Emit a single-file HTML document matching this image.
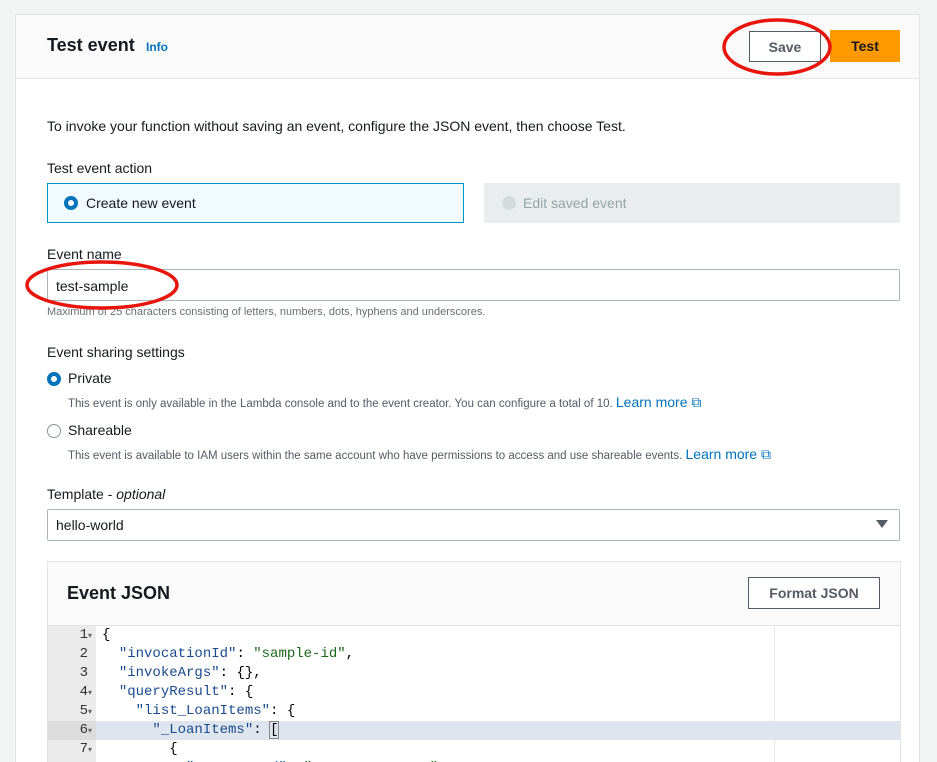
<!DOCTYPE html>
<html style="width:937px;height:762px;overflow:hidden"><head><meta charset="utf-8"><style>
*{box-sizing:border-box;margin:0;padding:0}
body{width:937px;height:762px;overflow:hidden;background:#f2f3f3;font-family:"Liberation Sans",sans-serif;color:#16191f;position:relative}
.wrap{position:absolute;left:0;top:0;width:937px;height:762px;overflow:hidden}
.a{position:absolute;white-space:nowrap}
.card{position:absolute;left:15px;top:14px;width:905px;height:760px;background:#fff;border:1px solid #e3e5e5}
.hdr{position:absolute;left:0;top:0;width:903px;height:64px;background:#fafafa;border-bottom:1px solid #e3e5e5}
.btn{position:absolute;border:1px solid #545b64;background:#fff;font-weight:bold;font-size:14px;color:#545b64;display:flex;align-items:center;justify-content:center}
.radio{position:absolute;width:14px;height:14px;border-radius:50%}
.on{border:4px solid #0073bb;background:#fff}
.off{border:1px solid #879596;background:#fff}
.link{color:#0073bb}
.mono{font-family:"Liberation Mono",monospace;font-size:14px}
.k{color:#1a4b8f}.s{color:#1b6a1b}
</style></head><body><div class="wrap">
<div class="card"><div class="hdr"></div></div>
<div class="a" style="left:47px;top:35px;font-size:18px;font-weight:bold">Test event</div>
<div class="a link" style="left:146px;top:40px;font-size:12px;font-weight:bold">Info</div>
<div class="btn" style="left:749px;top:31px;width:72px;height:31px">Save</div>
<div class="btn" style="left:830px;top:30px;width:70px;height:32px;background:#ff9900;border-color:#ff9900;color:#16191f">Test</div>

<div class="a" style="left:47px;top:118px;font-size:14px">To invoke your function without saving an event, configure the JSON event, then choose Test.</div>
<div class="a" style="left:47px;top:160px;font-size:14px">Test event action</div>
<div class="a" style="left:47px;top:183px;width:417px;height:40px;background:#f1faff;border:1px solid #0093c7"></div>
<div class="radio on" style="left:64px;top:196px"></div>
<div class="a" style="left:86px;top:195px;font-size:14px">Create new event</div>
<div class="a" style="left:484px;top:183px;width:416px;height:40px;background:#eaeded"></div>
<div class="radio" style="left:502px;top:196px;background:#d5dbdb"></div>
<div class="a" style="left:523px;top:195px;font-size:14px;color:#95a5a6">Edit saved event</div>

<div class="a" style="left:47px;top:246px;font-size:14px">Event name</div>
<div class="a" style="left:47px;top:269px;width:853px;height:32px;border:1px solid #aab7b8;border-radius:2px"></div>
<div class="a" style="left:56px;top:278px;font-size:14px">test-sample</div>
<div class="a" style="left:47px;top:306px;font-size:11px;color:#687078">Maximum of 25 characters consisting of letters, numbers, dots, hyphens and underscores.</div>

<div class="a" style="left:47px;top:344px;font-size:14px">Event sharing settings</div>
<div class="radio on" style="left:47px;top:372px"></div>
<div class="a" style="left:68px;top:370px;font-size:14px">Private</div>
<div class="a" style="left:68px;top:394px;font-size:11.5px;color:#545b64">This event is only available in the Lambda console and to the event creator. You can configure a total of 10. <span class="link" style="font-size:14px">Learn more ⧉</span></div>
<div class="radio off" style="left:47px;top:424px"></div>
<div class="a" style="left:68px;top:422px;font-size:14px">Shareable</div>
<div class="a" style="left:68px;top:446px;font-size:11.5px;color:#545b64">This event is available to IAM users within the same account who have permissions to access and use shareable events. <span class="link" style="font-size:14px">Learn more ⧉</span></div>

<div class="a" style="left:47px;top:486px;font-size:14px">Template - <i>optional</i></div>
<div class="a" style="left:47px;top:509px;width:853px;height:32px;border:1px solid #aab7b8;border-radius:2px"></div>
<div class="a" style="left:56px;top:517px;font-size:14px">hello-world</div>
<svg class="a" style="left:876px;top:519px" width="12" height="10"><path d="M0 1H12L6 9Z" fill="#545b64"/></svg>

<div class="a" style="left:47px;top:561px;width:854px;height:201px;border:1px solid #e3e5e5;border-bottom:none;background:#fafafa"></div>
<div class="a" style="left:67px;top:583px;font-size:18px;font-weight:bold">Event JSON</div>
<div class="btn" style="left:748px;top:577px;width:132px;height:32px">Format JSON</div>
<div class="a" style="left:48px;top:625px;width:852px;height:137px;background:#fff;border-top:1px solid #e3e5e5"></div>
<div class="a" style="left:48px;top:626px;width:48px;height:136px;background:#ebebeb"></div>
<div class="a" style="left:774px;top:626px;width:1px;height:136px;background:#e8e8e8"></div>
<div class="a" style="left:96px;top:721px;width:804px;height:19px;background:#dfe5ef"></div>
<div class="a" style="left:48px;top:721px;width:48px;height:19px;background:#dcdcdc"></div>
<div class="a mono" style="left:48px;top:626px;width:40px;line-height:19px;text-align:right;color:#333">1<br>2<br>3<br>4<br>5<br>6<br>7<br>8</div>
<div class="a" style="left:88px;top:626px;line-height:19px;font-size:8px;color:#666">▾<br><br><br>▾<br>▾<br>▾<br>▾</div>
<div class="a mono" style="left:102px;top:626px;line-height:19px;white-space:pre;color:#000">{
  <span class="k">"invocationId"</span>: <span class="s">"sample-id"</span>,
  <span class="k">"invokeArgs"</span>: {},
  <span class="k">"queryResult"</span>: {
    <span class="k">"list_LoanItems"</span>: {
      <span class="k">"_LoanItems"</span>: <span style="outline:1px solid #888">[</span>
        {
          <span class="k">"LoanItemId"</span>: <span class="s">"xxxxxxxxxxxxxx"</span>,</div>

<svg class="a" style="left:0;top:0" width="937" height="762"><ellipse cx="777" cy="47" rx="53" ry="27" fill="none" stroke="#e8150c" stroke-width="3.5"/><ellipse cx="102" cy="285" rx="75" ry="23" fill="none" stroke="#e8150c" stroke-width="3.5"/></svg>
</div></body></html>
